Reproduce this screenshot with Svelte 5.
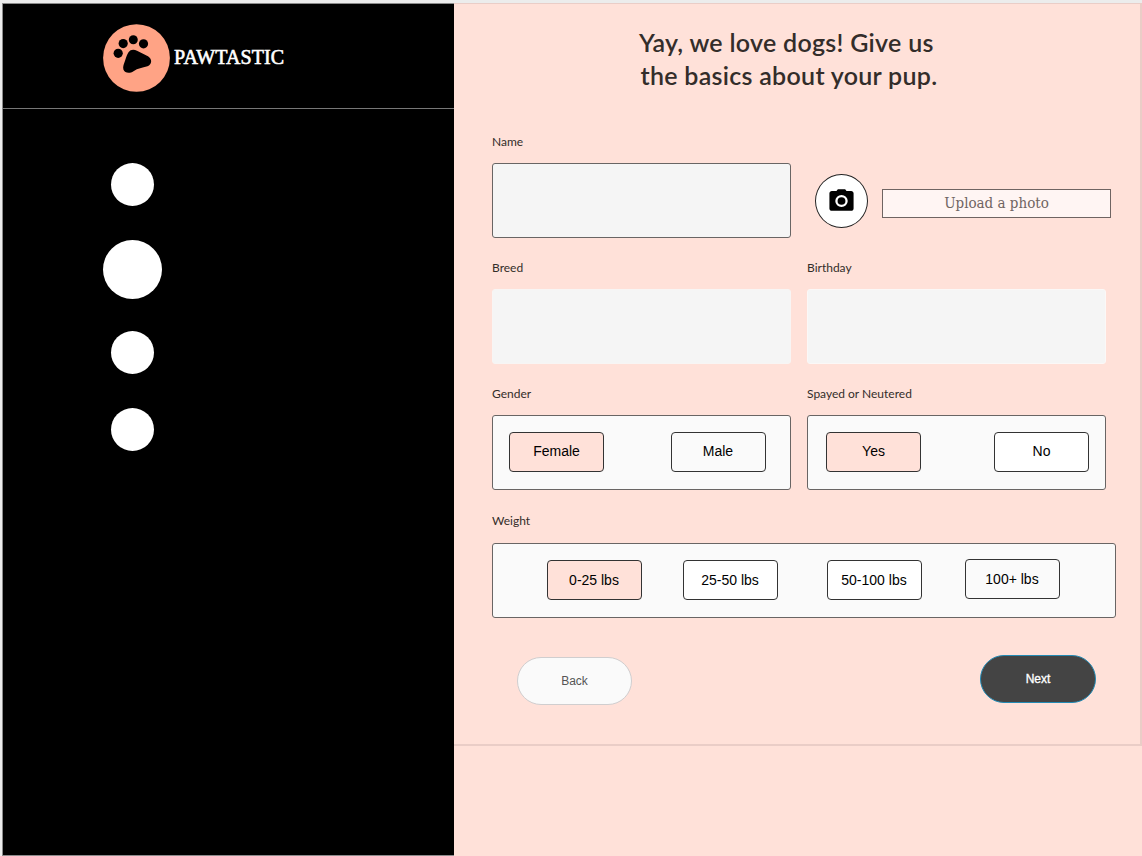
<script>
  const steps = [
    { size: 43, before: 54 },
    { size: 59, before: 34 },
    { size: 43, before: 32 },
    { size: 43, before: 34 }
  ];
  const weights = [
    { label: '0-25 lbs', kind: 'picked', gap: 53.5 },
    { label: '25-50 lbs', kind: 'white', gap: 41 },
    { label: '50-100 lbs', kind: 'white', gap: 49 },
    { label: '100+ lbs', kind: 'plain raised', gap: 43 }
  ];
</script>

<div class="page">
  <aside>
    <header>
      <svg class="logo" width="68" height="68" viewBox="0 0 68 68">
        <ellipse cx="33.5" cy="34" rx="33.4" ry="33.8" fill="#ffa385" />
        <circle cx="15.2" cy="29.3" r="4.6" />
        <circle cx="20.2" cy="19.6" r="4.6" />
        <circle cx="30.3" cy="15.8" r="4.5" />
        <circle cx="40.5" cy="19.8" r="4.6" />
        <path d="M25.5 28.3C27.5 25.2 31 25.1 34 26.8L45 32.3C49.5 35 49.1 40.5 44.5 42.3C39 43.8 35 44.3 30.5 47.2C26.5 49.8 21.8 49.1 20.4 45.5C19.5 42.5 21.1 39.5 22.2 36.2C23.4 32.8 24 30.5 25.5 28.3Z" />
      </svg>
      <span class="brand">PAWTASTIC</span>
    </header>
    <div class="steps">
      {#each steps as s}
        <i style="width:{s.size}px;height:{s.size}px;margin-top:{s.before}px"></i>
      {/each}
    </div>
  </aside>

  <main>
    <section>
      <h1><span class="l1">Yay, we love dogs! Give us</span><span class="l2">the basics about your pup.</span></h1>
      <div class="grid">
        <div class="field">
          <span class="label">Name</span>
          <div class="box input outlined"></div>
        </div>
        <div class="upload">
          <div class="camera">
            <svg width="29" height="28" viewBox="0 0 24 24" preserveAspectRatio="none">
              <path d="M9 2 7.8 3.4H4C2.9 3.4 2 4.3 2 5.4v13c0 1.1.9 2 2 2h16c1.1 0 2-.9 2-2v-13c0-1.1-.9-2-2-2h-3.8L15 2Z" />
              <circle cx="12" cy="12" r="4.2" fill="none" stroke="#fff" stroke-width="1.9" />
            </svg>
          </div>
          <div class="photo"><span>Upload a photo</span></div>
        </div>
        <div class="field">
          <span class="label">Breed</span>
          <div class="box input"></div>
        </div>
        <div class="field">
          <span class="label">Birthday</span>
          <div class="box input light"></div>
        </div>
        <div class="field">
          <span class="label">Gender</span>
          <div class="box outlined gender">
            <button class="picked">Female</button>
            <button class="plain">Male</button>
          </div>
        </div>
        <div class="field">
          <span class="label">Spayed or Neutered</span>
          <div class="box outlined neutered">
            <button class="picked">Yes</button>
            <button class="white">No</button>
          </div>
        </div>
      </div>
      <div class="field weight">
        <span class="label">Weight</span>
        <div class="box outlined weights">
          {#each weights as w}
            <button class={w.kind} style="margin-left:{w.gap}px">{w.label}</button>
          {/each}
        </div>
      </div>
      <nav>
        <button class="pill back">Back</button>
        <button class="pill next">Next</button>
      </nav>
    </section>
  </main>
</div>

<style>
  :global(body) { margin: 0; background: #ececec; }
  .page {
    box-sizing: border-box;
    width: 1142px;
    height: 856px;
    padding: 3px 0 0 2px;
    display: flex;
    overflow: hidden;
    font-family: "Liberation Sans", Arial, sans-serif;
  }
  aside {
    box-sizing: border-box;
    width: 452px;
    height: 853px;
    background: #000;
    border: 1px solid #8b8b8b;
    border-right: 0;
    flex: none;
  }
  header {
    box-sizing: border-box;
    height: 105px;
    padding: 20px 0 0 100px;
    display: flex;
    align-items: flex-start;
    border-bottom: 1px solid #777;
  }
  .logo { flex: none; }
  .brand {
    margin: 21px 0 0 3px;
    color: #fff;
    font: 400 20px/24px "Liberation Serif", serif;
    -webkit-text-stroke: 0.6px #fff;
    letter-spacing: 0.1px;
    white-space: nowrap;
  }
  .steps {
    width: 59px;
    margin-left: 100px;
    display: flex;
    flex-direction: column;
    align-items: center;
  }
  .steps i { border-radius: 50%; background: #fff; }
  main { flex: 1; height: 853px; background: #ffe1d9; }
  section {
    box-sizing: border-box;
    height: 743px;
    padding: 22px 0 0 38px;
    border: solid #eacdc7;
    border-width: 1px 2px 2px 0;
  }
  h1 {
    margin: 0 0 0 147px;
    display: flex;
    flex-direction: column;
    font: 600 25px/33px Lato, sans-serif;
    letter-spacing: 0.29px;
    color: #332d2a;
    white-space: nowrap;
  }
  .l2 { margin-left: 1.5px; }
  .grid {
    margin-top: 41px;
    display: grid;
    grid-template-columns: 299px 304px;
    grid-auto-rows: 105px;
    gap: 21px 16px;
  }
  .field { display: flex; flex-direction: column; gap: 12px; }
  .label { font: 400 12px/18px Lato, sans-serif; color: #332d2a; }
  .box {
    box-sizing: border-box;
    width: 299px;
    height: 75px;
    border: 1px solid transparent;
    border-radius: 3px;
    background: #fafafa;
    display: flex;
  }
  .input { background: #f5f5f5; border-color: #f8f5f4; }
  .light { border-color: #fbf8f7; }
  .outlined { border-color: #696564; }
  button {
    box-sizing: border-box;
    width: 95px;
    height: 40px;
    padding: 0 0 2px;
    border: 1px solid #333;
    border-radius: 4px;
    color: #000;
    font: 14px/18px "Liberation Sans", Arial, sans-serif;
    flex: none;
  }
  .picked { background: #ffe1d9; }
  .plain { background: #fafafa; }
  .white { background: #fff; }
  .gender { padding: 16px 0 0 16px; gap: 66.5px; }
  .neutered { padding: 16px 0 0 18px; gap: 73px; }
  .upload { display: flex; padding: 41px 0 0 8px; }
  .camera {
    box-sizing: border-box;
    width: 53px;
    height: 54px;
    border: 1px solid #222;
    border-radius: 50%;
    background: #fff;
    display: flex;
    align-items: center;
    justify-content: center;
    flex: none;
  }
  .photo {
    box-sizing: border-box;
    width: 229px;
    height: 29px;
    margin: 15px 0 0 14px;
    border: 1px solid #6f6462;
    background: #fff5f3;
    color: #6f6462;
    font: 15px/27px "DejaVu Serif Condensed", "DejaVu Serif", serif;
    font-stretch: condensed;
    text-align: center;
    flex: none;
  }
  .weight { margin-top: 22px; }
  .weight .label { margin-bottom: 1px; }
  .weights { width: 624px; height: 75px; padding-top: 16px; }
  .weights button { padding-bottom: 0; }
  .raised { margin-top: -1px; }
  nav {
    margin: 37px 44px 0 25px;
    display: flex;
    justify-content: space-between;
  }
  .pill { width: 115px; height: 48px; border-radius: 24px; font-size: 12px; padding-bottom: 0; }
  .back { margin-top: 2px; background: #fafafa; border-color: #d0cecf; color: #555; }
  .next { width: 116px; background: #444; border-color: #238bb5; color: #fff; -webkit-text-stroke: 0.35px #fff; }
</style>
